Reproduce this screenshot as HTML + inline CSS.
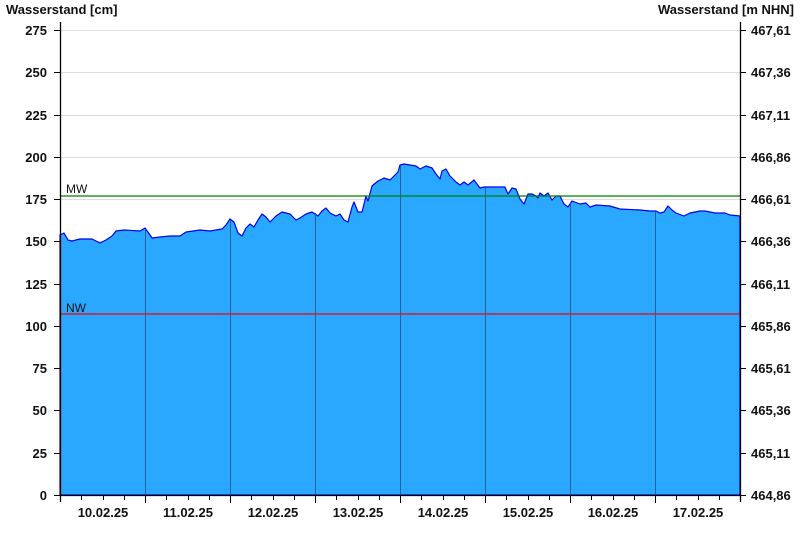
<!DOCTYPE html>
<html><head><meta charset="utf-8"><style>
html,body{margin:0;padding:0;background:#fff;width:800px;height:550px;overflow:hidden}
svg text{font-family:"Liberation Sans",Arial,sans-serif;font-weight:bold;font-size:13px;fill:#111}
</style></head><body>
<svg width="800" height="550" viewBox="0 0 800 550" xmlns="http://www.w3.org/2000/svg">
<text x="6" y="14">Wasserstand [cm]</text>
<text x="794" y="14" text-anchor="end">Wasserstand [m NHN]</text>
<g stroke="#dcdcdc" stroke-width="1">
<line x1="60" x2="740" y1="30.5" y2="30.5"/><line x1="60" x2="740" y1="72.5" y2="72.5"/><line x1="60" x2="740" y1="115.5" y2="115.5"/><line x1="60" x2="740" y1="157.5" y2="157.5"/><line x1="60" x2="740" y1="199.5" y2="199.5"/><line x1="60" x2="740" y1="241.5" y2="241.5"/><line x1="60" x2="740" y1="284.5" y2="284.5"/><line x1="60" x2="740" y1="326.5" y2="326.5"/><line x1="60" x2="740" y1="368.5" y2="368.5"/><line x1="60" x2="740" y1="410.5" y2="410.5"/><line x1="60" x2="740" y1="453.5" y2="453.5"/>
</g>
<polygon fill="#2aa8ff" stroke="#0000ee" stroke-width="1.2" stroke-linejoin="round" points="60,495 60,235 64,233 68,240 72,241 80,239 92,239 100,243 106,240 112,236 116,231 124,230 140,231 145,228 150,235 152,238 160,237 170,236 180,236 186,232 200,230 210,231 222,229 226,225 230,219 234,222 238,233 242,236 246,228 250,224 254,227 258,220 262,214 266,217 270,222 276,216 282,212 290,214 296,220 300,218 306,214 312,212 318,216 322,211 326,208 330,213 336,216 340,214 344,220 348,222 352,207 354,202 358,212 362,212 366,196 368,201 372,186 378,181 384,178 390,180 394,176 398,172 400,165 404,164 416,166 420,169 426,166 432,168 436,174 440,179 442,171 446,169 450,176 456,182 460,185 464,182 468,185 474,180 480,188 484,187 505,187 508,194 512,188 516,189 520,199 524,204 528,194 532,194 536,196 538,198 540,193 544,196 548,193 552,200 556,196 560,196 564,204 568,207 572,201 580,204 586,203 590,207 596,205 610,206 620,209 640,210 650,211 656,211 660,213 664,212 668,206 672,210 676,213 684,216 690,213 700,211 705,211 715,213 725,213 730,215 740,216 740,495"/>
<g stroke="#1e6496" stroke-width="1">
<line x1="145.5" x2="145.5" y1="230" y2="495"/><line x1="230.5" x2="230.5" y1="220" y2="495"/><line x1="315.5" x2="315.5" y1="213" y2="495"/><line x1="400.5" x2="400.5" y1="166" y2="495"/><line x1="485.5" x2="485.5" y1="188" y2="495"/><line x1="570.5" x2="570.5" y1="203" y2="495"/><line x1="655.5" x2="655.5" y1="212" y2="495"/>
</g>
<line x1="60" x2="740" y1="196" y2="196" stroke="#008000" stroke-width="1.3"/>
<line x1="60" x2="740" y1="314" y2="314" stroke="#ff0000" stroke-width="1.3"/>
<text x="66" y="193" style="font-weight:normal;font-size:12px">MW</text>
<text x="66" y="312" style="font-weight:normal;font-size:12px">NW</text>
<g stroke="#000" stroke-width="1.3">
<line x1="60.5" x2="60.5" y1="22" y2="502"/>
<line x1="740.5" x2="740.5" y1="22" y2="502"/>
<line x1="60" x2="740" y1="495.5" y2="495.5"/>
</g>
<g stroke="#000" stroke-width="1">
<path d="M54 30.5H60M54 72.5H60M54 115.5H60M54 157.5H60M54 199.5H60M54 241.5H60M54 284.5H60M54 326.5H60M54 368.5H60M54 410.5H60M54 453.5H60M54 495.5H60"/>
<path d="M740 30.5H746M740 72.5H746M740 115.5H746M740 157.5H746M740 199.5H746M740 241.5H746M740 284.5H746M740 326.5H746M740 368.5H746M740 410.5H746M740 453.5H746M740 495.5H746"/>
<path d="M81.5 495V500M103.5 495V500M124.5 495V500M145.5 495V503M166.5 495V500M188.5 495V500M209.5 495V500M230.5 495V503M251.5 495V500M273.5 495V500M294.5 495V500M315.5 495V503M336.5 495V500M358.5 495V500M379.5 495V500M400.5 495V503M421.5 495V500M443.5 495V500M464.5 495V500M485.5 495V503M506.5 495V500M528.5 495V500M549.5 495V500M570.5 495V503M591.5 495V500M613.5 495V500M634.5 495V500M655.5 495V503M676.5 495V500M698.5 495V500M719.5 495V500"/>
</g>
<g text-anchor="end">
<text x="47" y="35">275</text><text x="47" y="77">250</text><text x="47" y="120">225</text><text x="47" y="162">200</text><text x="47" y="204">175</text><text x="47" y="246">150</text><text x="47" y="289">125</text><text x="47" y="331">100</text><text x="47" y="373">75</text><text x="47" y="415">50</text><text x="47" y="458">25</text><text x="47" y="500">0</text>
</g>
<g>
<text x="751" y="35">467,61</text><text x="751" y="77">467,36</text><text x="751" y="120">467,11</text><text x="751" y="162">466,86</text><text x="751" y="204">466,61</text><text x="751" y="246">466,36</text><text x="751" y="289">466,11</text><text x="751" y="331">465,86</text><text x="751" y="373">465,61</text><text x="751" y="415">465,36</text><text x="751" y="458">465,11</text><text x="751" y="500">464,86</text>
</g>
<g text-anchor="middle">
<text x="103" y="517">10.02.25</text><text x="188" y="517">11.02.25</text><text x="273" y="517">12.02.25</text><text x="358" y="517">13.02.25</text><text x="443" y="517">14.02.25</text><text x="528" y="517">15.02.25</text><text x="613" y="517">16.02.25</text><text x="698" y="517">17.02.25</text>
</g>
</svg>
</body></html>
